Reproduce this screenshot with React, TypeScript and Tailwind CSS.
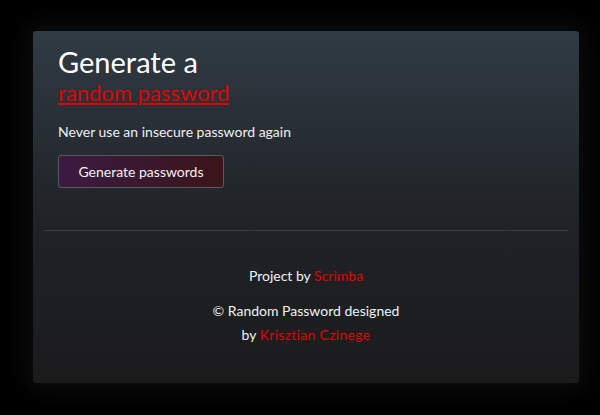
export default function App() {
  return (
    <div className="h-[415px] w-[600px] bg-black pt-[31px] pl-[33px] font-['Lato',sans-serif]">
      <div className="w-[546px] h-[352px] rounded-[3px] bg-gradient-to-b from-[#303b44] via-[#1f2226] via-55% to-[#1b1b1c] shadow-[0_0_24px_6px_rgba(40,40,40,0.35)] flex flex-col">
        <div className="px-[25px] pt-[13px]">
          <h1 className="text-[29px] leading-[36px] text-white font-normal">Generate a</h1>
          <a className="block text-[22px] leading-[26px] text-[#e00000] underline decoration-2 underline-offset-2 w-fit">
            random password
          </a>
          <p className="mt-[16px] text-[14px] leading-[20px] text-[#f0f0f0]">Never use an insecure password again</p>
          <button className="mt-[13px] w-[166px] h-[33px] rounded-[3px] border border-[#5a5a5e] bg-gradient-to-r from-[#3b1a42] to-[#3a1418] text-[14px] text-[#f2f2f2]">
            Generate passwords
          </button>
        </div>
        <div className="mx-[11px] mt-[42px] h-[1px] bg-[#3c3d40]" />
        <div className="flex flex-col items-center text-[14px] text-[#f2f2f2]">
          <p className="mt-[35px] leading-[20px]">
            Project by <span className="text-[#e00000]">Scrimba</span>
          </p>
          <p className="mt-[13px] leading-[24px]">© Random Password designed</p>
          <p className="leading-[24px]">
            by <span className="text-[#e00000] tracking-[0.3px]">Krisztian Czinege</span>
          </p>
        </div>
      </div>
    </div>
  );
}
